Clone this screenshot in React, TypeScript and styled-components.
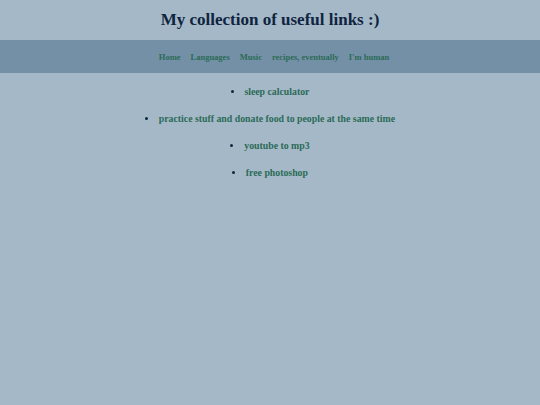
import React from "react";
import styled, { createGlobalStyle } from "styled-components";

const GlobalStyle = createGlobalStyle`
  html, body {
    margin: 0;
    padding: 0;
    background: #a5b8c7;
    font-family: "Liberation Serif", "Times New Roman", serif;
  }
`;

const Page = styled.div`
  min-height: 405px;
  background: #a5b8c7;
  display: flex;
  flex-direction: column;
`;

const Title = styled.h1`
  margin: 0;
  height: 40px;
  display: flex;
  align-items: center;
  justify-content: center;
  font-size: 17px;
  font-weight: bold;
  color: #0f2440;
`;

const NavBar = styled.nav`
  height: 33px;
  padding-left: 8px;
  background: #7490a6;
  display: flex;
  align-items: center;
  justify-content: center;
  gap: 10px;
`;

const NavLink = styled.a`
  font-size: 8.5px;
  font-weight: bold;
  color: #2b6b57;
  text-decoration: none;
`;

const LinkList = styled.ul`
  margin: 0;
  padding: 12px 0 0;
  list-style: disc inside;
  text-align: center;
  display: flex;
  flex-direction: column;
  gap: 13px;
`;

const Item = styled.li`
  font-size: 9.8px;
  line-height: 14px;
  font-weight: bold;
  color: #0f2440;

  &::marker {
    color: #0f2440;
  }
`;

const ItemLink = styled.a`
  color: #2b6b57;
  text-decoration: none;
`;

const navItems = ["Home", "Languages", "Music", "recipes, eventually", "I'm human"];
const links = [
  "sleep calculator",
  "practice stuff and donate food to people at the same time",
  "youtube to mp3",
  "free photoshop",
];

export default function App() {
  return (
    <>
      <GlobalStyle />
      <Page>
        <Title>My collection of useful links :)</Title>
        <NavBar>
          {navItems.map((n) => (
            <NavLink key={n} href="#">
              {n}
            </NavLink>
          ))}
        </NavBar>
        <LinkList>
          {links.map((l) => (
            <Item key={l}>
              <ItemLink href="#">{l}</ItemLink>
            </Item>
          ))}
        </LinkList>
      </Page>
    </>
  );
}
